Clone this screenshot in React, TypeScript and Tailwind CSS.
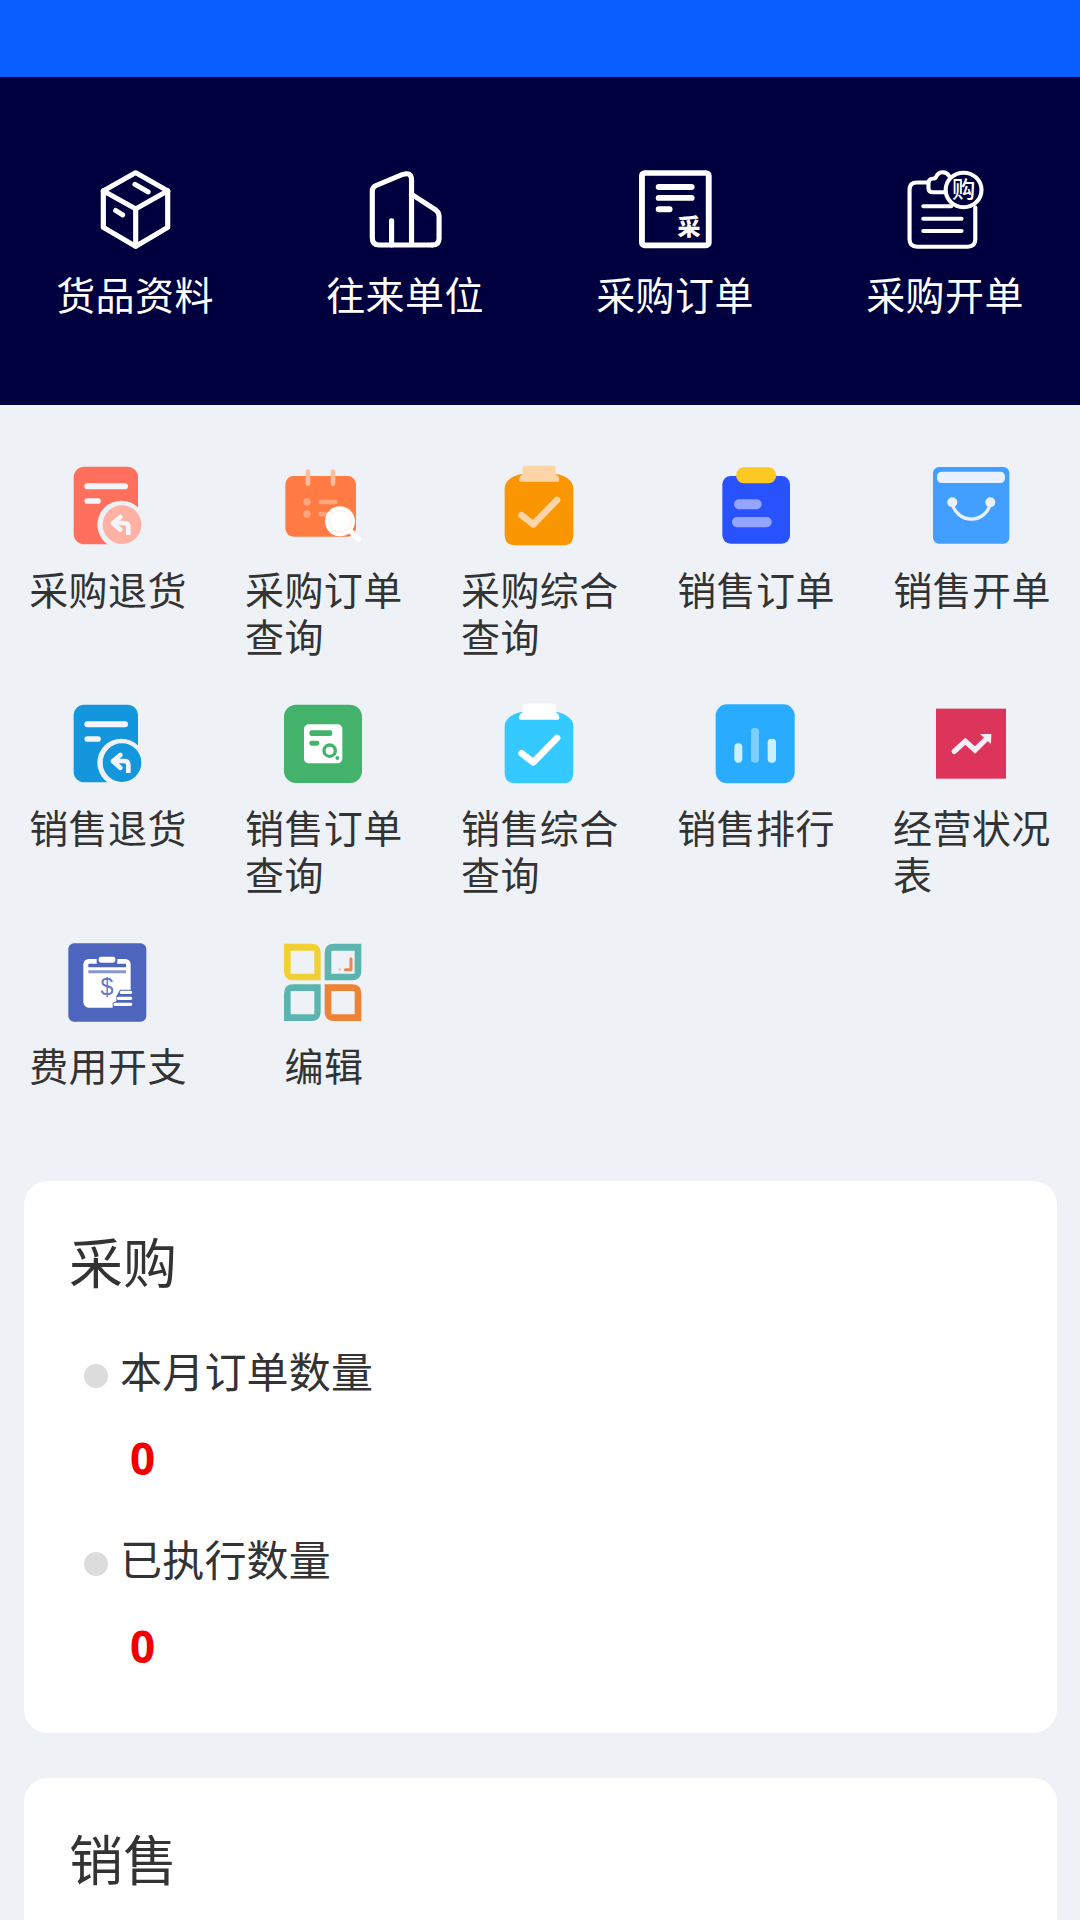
import type { ReactNode } from 'react'

function TopIcon({ children }: { children: ReactNode }) {
  return (
    <svg viewBox="0 0 244 244" preserveAspectRatio="none" className="w-[84px] h-[81px]" fill="none" stroke="white" strokeLinecap="round" strokeLinejoin="round">
      {children}
    </svg>
  )
}

function MenuIcon({ children }: { children: ReactNode }) {
  return (
    <svg viewBox="0 0 252 252" className="w-[84px] h-[84px]" fill="none" strokeLinecap="round" strokeLinejoin="round">
      {children}
    </svg>
  )
}

function BoxIcon() {
  return (
    <TopIcon>
      <g strokeWidth="15">
        <path d="M124 14 217 69V179L124 236 30 179V69Z" />
        <path d="M30 69 124 123 217 69M124 123V236" />
        <path d="M122 49 160 72M66 128 86 141" />
      </g>
    </TopIcon>
  )
}

function BuildingIcon() {
  return (
    <TopIcon>
      <g strokeWidth="15">
        <path d="M201 232H47Q27 232 27 210V70Q27 58 38 53L116 19Q141 11 141 36V232" />
        <path d="M141 79 212 127Q221 134 221 146V212Q221 232 201 232" />
        <path d="M83 159V232" />
      </g>
    </TopIcon>
  )
}

function PurchaseOrderIcon() {
  return (
    <TopIcon>
      <rect x="26" y="15" width="194" height="218" rx="8" strokeWidth="17" />
      <path d="M75 57H170M75 90H170M75 124H106" strokeWidth="18" />
      <text x="163" y="202" fontSize="67" textAnchor="middle" fill="white" stroke="none" className="font-black">采</text>
    </TopIcon>
  )
}

function PurchaseBillIcon() {
  return (
    <TopIcon>
      <g strokeWidth="12">
        <path d="M71 44H41Q19 44 19 66V215Q19 237 41 237H188Q210 237 210 215V118" />
        <path d="M134 24C124 8 103 10 96 27Q94 32 86 32Q74 33 74 46V60Q74 73 88 73H122" />
        <path d="M59 115H140M59 153H170M59 190H170" />
        <circle cx="176" cy="66" r="52" />
      </g>
      <text x="176" y="91" fontSize="68" textAnchor="middle" fill="white" stroke="none" className="font-medium">购</text>
    </TopIcon>
  )
}

function ReturnIcon({ color, badge }: { color: string; badge: string }) {
  return (
    <MenuIcon>
      <rect x="23" y="11" width="193" height="233" rx="32" fill={color} />
      <path d="M64 70H177" stroke="#f3f5fb" strokeWidth="18" />
      <path d="M64 114H96" stroke="#f3f5fb" strokeWidth="17" />
      <circle cx="166" cy="185" r="72" fill="#eef2f7" />
      <circle cx="168" cy="185" r="58" fill={badge} />
      <g stroke="#f3f5fb" strokeWidth="14">
        <path d="M163 162 141 181 163 200" />
        <path d="M144 180H174Q187 180 187 192V209" strokeLinecap="square" />
      </g>
    </MenuIcon>
  )
}

function CalendarSearchIcon() {
  return (
    <MenuIcon>
      <rect x="10" y="39" width="212" height="182" rx="25" fill="#ff7b43" />
      <path d="M78 26V62M153 26V62" stroke="#ffbd9d" strokeWidth="14" />
      <g fill="#ffa67e">
        <circle cx="75" cy="117" r="11" />
        <circle cx="75" cy="153" r="11" />
      </g>
      <path d="M116 117H160M116 153H150" stroke="#ffa67e" strokeWidth="14" />
      <circle cx="174" cy="175" r="45" fill="white" />
      <circle cx="174" cy="175" r="33" stroke="#ffe6d9" strokeWidth="3" strokeDasharray="14 6" />
      <path d="M207 206 229 228" stroke="white" strokeWidth="16" />
    </MenuIcon>
  )
}

function CheckBoardIcon({ color, mark }: { color: string; mark: string }) {
  return (
    <MenuIcon>
      <path d="M72 33H174C198 36 226 52 226 76V215Q226 247 194 247H52Q20 247 20 215V76C20 52 48 36 72 33Z" fill={color} />
      <path d="M79 8H168Q173 8 173 13V34Q185 40 184 52Q184 56 180 56H67Q63 56 63 52Q63 40 74 34V13Q74 8 79 8Z" fill={mark} />
      <path d="M71 157 106 184 177 111" stroke={mark} strokeWidth="20" />
    </MenuIcon>
  )
}

function SalesOrderIcon() {
  return (
    <MenuIcon>
      <rect x="25" y="39" width="203" height="203" rx="25" fill="#2952ff" />
      <rect x="66" y="13" width="121" height="48" rx="24" fill="#fcc822" />
      <rect x="60" y="109" width="83" height="30" rx="15" fill="#93a5ff" />
      <rect x="54" y="162" width="119" height="31" rx="15" fill="#93a5ff" />
    </MenuIcon>
  )
}

function SalesBillIcon() {
  return (
    <MenuIcon>
      <rect x="9" y="12" width="229" height="230" rx="18" fill="#429eff" />
      <rect x="21" y="26" width="204" height="34" rx="14" fill="#e9f1fc" />
      <circle cx="67" cy="118" r="15" fill="#e9f1fc" />
      <circle cx="181" cy="118" r="15" fill="#e9f1fc" />
      <path d="M67 121A58 58 0 0 0 181 121" stroke="#e9f1fc" strokeWidth="10" />
    </MenuIcon>
  )
}

function SalesQueryIcon() {
  return (
    <MenuIcon>
      <rect x="6" y="11" width="234" height="235" rx="36" fill="#43b36b" />
      <rect x="66" y="70" width="115" height="117" rx="14" fill="white" />
      <rect x="82" y="88" width="69" height="17" rx="7" fill="#43b36b" />
      <rect x="82" y="119" width="30" height="15" rx="7" fill="#43b36b" />
      <circle cx="143" cy="149" r="17" stroke="#43b36b" strokeWidth="10" />
      <circle cx="166" cy="171" r="6" fill="#43b36b" />
    </MenuIcon>
  )
}

function RankIcon() {
  return (
    <MenuIcon>
      <rect x="5" y="10" width="237" height="237" rx="34" fill="#29abff" />
      <rect x="61" y="127" width="24" height="58" rx="12" fill="#cbf0ff" />
      <rect x="111" y="81" width="24" height="104" rx="10" fill="#7acfff" />
      <rect x="161" y="113" width="25" height="72" rx="11" fill="#cbf0ff" />
    </MenuIcon>
  )
}

function TrendIcon() {
  return (
    <MenuIcon>
      <rect x="18" y="23" width="210" height="210" fill="#dc345a" />
      <path d="M73 151 106 121 135 147 170 113" stroke="#f8eef5" strokeWidth="16" strokeLinejoin="miter" />
      <path d="M150 99H184L183 129Z" fill="#f8eef5" />
    </MenuIcon>
  )
}

function ExpenseIcon() {
  return (
    <MenuIcon>
      <rect x="7" y="13" width="234" height="235" rx="17" fill="#4e65be" />
      <rect x="52" y="60" width="142" height="146" rx="16" fill="white" />
      <path d="M67 74H180V85H67Z" fill="#4e65be" />
      <rect x="92" y="46" width="62" height="32" rx="8" fill="#4e65be" />
      <rect x="98" y="53" width="50" height="18" rx="7" fill="white" />
      <path d="M67 94H180V103H67Z" fill="#8797d4" />
      <text x="123" y="168" fontSize="70" textAnchor="middle" fill="#6579c8" className="font-[Liberation_Sans]">$</text>
      <path d="M162 152H197V210H140V192L151 186V172Z" fill="#4e65be" />
      <path d="M166 160H194M157 178H194M147 196H194" stroke="white" strokeWidth="10" />
    </MenuIcon>
  )
}

function EditIcon() {
  return (
    <MenuIcon>
      <g fillRule="evenodd">
        <path d="M6 14H88Q116 14 116 42V124H34Q6 124 6 96ZM26 35V104H97V35Z" fill="#f1d034" />
        <path d="M156 14H238V96Q238 124 210 124H128V42Q128 14 156 14ZM148 35V104H218V35Z" fill="#5bb5ae" />
        <path d="M34 136H116V218Q116 246 88 246H6V164Q6 136 34 136ZM26 156V226H97V156Z" fill="#5bb5ae" />
        <path d="M128 136H210Q238 136 238 164V246H156Q128 246 128 218ZM148 156V226H218V156Z" fill="#ee8336" />
      </g>
      <path d="M207 59V92H190" stroke="#e8894f" strokeWidth="9" />
      <path d="M171 91H176" stroke="#f0c3a6" strokeWidth="5" />
    </MenuIcon>
  )
}

const shortcuts = [
  { label: '货品资料', icon: <BoxIcon /> },
  { label: '往来单位', icon: <BuildingIcon /> },
  { label: '采购订单', icon: <PurchaseOrderIcon /> },
  { label: '采购开单', icon: <PurchaseBillIcon /> },
]

const menu = [
  { label: '采购退货', icon: <ReturnIcon color="#ff6f5e" badge="#ffb1a4" /> },
  { label: '采购订单查询', icon: <CalendarSearchIcon /> },
  { label: '采购综合查询', icon: <CheckBoardIcon color="#fa9602" mark="#fdd5a6" /> },
  { label: '销售订单', icon: <SalesOrderIcon /> },
  { label: '销售开单', icon: <SalesBillIcon /> },
  { label: '销售退货', icon: <ReturnIcon color="#1496dc" badge="#1496dc" /> },
  { label: '销售订单查询', icon: <SalesQueryIcon /> },
  { label: '销售综合查询', icon: <CheckBoardIcon color="#34caff" mark="#ffffff" /> },
  { label: '销售排行', icon: <RankIcon /> },
  { label: '经营状况表', icon: <TrendIcon /> },
  { label: '费用开支', icon: <ExpenseIcon /> },
  { label: '编辑', icon: <EditIcon /> },
]

function Stat({ label, value }: { label: string; value: number }) {
  return (
    <div className="h-[188px] pl-[60px]">
      <div className="flex items-center h-16">
        <span className="w-6 h-6 mt-3 rounded-full bg-[#dcdcdc]" />
        <span className="ml-3 text-[42px] tracking-[0.2px] leading-[64px]">{label}</span>
      </div>
      <div className="mt-6 pl-[46px] font-['Noto_Sans',sans-serif] text-[44px] leading-[64px] font-bold text-[#f00000]">{value}</div>
    </div>
  )
}

function Card({ title, children }: { title: string; children?: ReactNode }) {
  return (
    <section className="ml-6 mr-[23px] h-[552px] shrink-0 rounded-3xl bg-white pt-12">
      <h2 className="pl-[45px] text-[54px] leading-[64px]">{title}</h2>
      <div className="pt-[45px]">{children}</div>
    </section>
  )
}

export default function App() {
  return (
    <div className="w-[1080px] h-[1920px] overflow-hidden flex flex-col bg-[#eef2f7] text-[#333333] font-['Noto_Sans_CJK_SC',sans-serif]">
      <div className="h-[77px] shrink-0 bg-[#0a5dff]" />

      <nav className="h-[328px] shrink-0 grid grid-cols-4 bg-[#00003e] pt-[91px] text-white">
        {shortcuts.map((item) => (
          <div key={item.label} className="flex flex-col items-center">
            {item.icon}
            <span className="mt-[21px] text-[39px] tracking-[0.4px] leading-[47px]">{item.label}</span>
          </div>
        ))}
      </nav>

      <div className="mt-[58px] h-[718px] shrink-0 grid grid-cols-5 auto-rows-[238px]">
        {menu.map((item) => (
          <div key={item.label} className="flex flex-col items-center">
            {item.icon}
            <span className="mt-[18px] max-w-[158px] text-[39px] tracking-[0.4px] leading-[47px]">{item.label}</span>
          </div>
        ))}
      </div>

      <div className="flex flex-col gap-[45px]">
        <Card title="采购">
          <Stat label="本月订单数量" value={0} />
          <Stat label="已执行数量" value={0} />
        </Card>
        <Card title="销售" />
      </div>
    </div>
  )
}
